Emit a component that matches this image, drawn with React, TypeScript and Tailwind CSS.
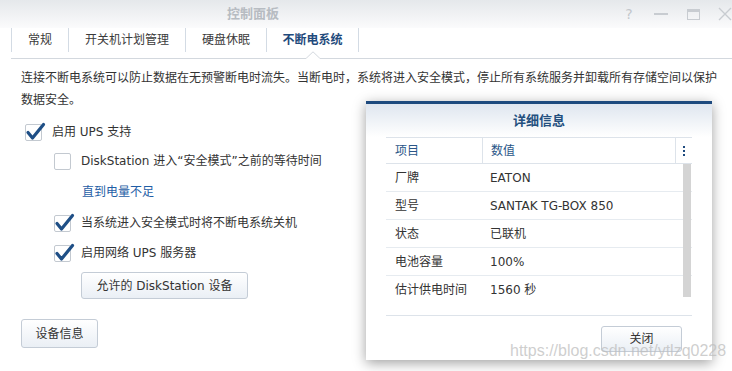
import React from "react";

const font = "font-['DejaVu_Sans','Noto_Sans_CJK_SC',sans-serif]";

const CheckBox = ({ checked }: { checked?: boolean }) => (
  <div className="relative w-[17px] h-[17px] shrink-0 rounded-[2px] border border-[#c3c9d0] bg-white">
    {checked && (
      <svg
        className="absolute -left-[1px] -top-[3px] overflow-visible"
        width="22"
        height="20"
        viewBox="0 0 22 20"
      >
        <path
          d="M3 10.5 L7.5 16 L18.5 2.5"
          fill="none"
          stroke="#1f4f86"
          strokeWidth="3.2"
          strokeLinecap="round"
          strokeLinejoin="round"
        />
      </svg>
    )}
  </div>
);

const Button = ({ label, className }: { label: string; className: string }) => (
  <button
    className={`${className} flex items-center justify-center rounded-[3px] border border-[#c4ccd6] bg-gradient-to-b from-white to-[#eaeff5] text-[12px] text-[#333]`}
  >
    {label}
  </button>
);

const tabs = [
  { label: "常规", w: "w-[57px]" },
  { label: "开关机计划管理", w: "w-[117px]" },
  { label: "硬盘休眠", w: "w-[81px]" },
  { label: "不断电系统", w: "w-[93px]", active: true },
];

const rows = [
  ["厂牌", "EATON"],
  ["型号", "SANTAK TG-BOX 850"],
  ["状态", "已联机"],
  ["电池容量", "100%"],
  ["估计供电时间", "1560 秒"],
];

export default function App() {
  return (
    <div className={`relative w-[732px] h-[371px] overflow-hidden bg-white ${font} text-[12px] text-[#333]`}>
      {/* title bar */}
      <div className="h-[28px] flex items-center bg-gradient-to-b from-[#e5e8eb] to-[#fbfbfc]">
        <div className="pl-[227px] text-[13px] font-bold text-[#b7bcc2]">控制面板</div>
        <div className="ml-auto flex items-center gap-[18px] text-[#c3c7cc]">
          <span className="w-[14px] text-center text-[14px] leading-none">?</span>
          <span className="w-[14px] h-[2px] bg-[#c8ccd1]" />
          <span className="mx-[0.5px] w-[13px] h-[11px] border border-[#c8ccd1] border-t-[3px]" />
          <svg width="14" height="14" viewBox="0 0 14 14">
            <path d="M1 1 L13 13 M13 1 L1 13" stroke="#c8ccd1" strokeWidth="1.4" />
          </svg>
        </div>
      </div>

      {/* tabs */}
      <div className="ml-[11px] h-[31px] border-b border-[#d3d8de] relative">
        <div className="flex h-[24px] items-center">
          {tabs.map((t, i) => (
            <div
              key={t.label}
              className={`${t.w} h-full flex items-center justify-center border-l border-[#d3dbe4] ${
                i === tabs.length - 1 ? "border-r" : ""
              } ${t.active ? "font-bold text-[#1f4a7c]" : "text-[#3a3a3a]"}`}
            >
              {t.label}
            </div>
          ))}
        </div>
        <svg className="absolute left-[295px] -bottom-[1px]" width="14" height="8" viewBox="0 0 14 8">
          <path d="M0 7.5 L7 0.8 L14 7.5" fill="white" stroke="#d3d8de" strokeWidth="1" />
          <rect x="0.5" y="7" width="13" height="1" fill="white" />
        </svg>
      </div>

      {/* content */}
      <div className="pl-[21px] pr-[11px] pt-[8px]">
        <p className="leading-[22px] text-[#333]">
          连接不断电系统可以防止数据在无预警断电时流失。当断电时，系统将进入安全模式，停止所有系统服务并卸载所有存储空间以保护数据安全。
        </p>

        <div className="mt-[11px] ml-[4px] flex items-center h-[20px] gap-[10px]">
          <CheckBox checked />
          <span>启用 UPS 支持</span>
        </div>

        <div className="mt-[9px] ml-[33px] flex items-center h-[20px] gap-[10px]">
          <CheckBox />
          <span>DiskStation 进入“安全模式”之前的等待时间</span>
        </div>

        <div className="mt-[11px] ml-[61px] h-[20px] flex items-center text-[#1f5ea6]">直到电量不足</div>

        <div className="mt-[11px] ml-[33px] flex items-center h-[20px] gap-[10px]">
          <CheckBox checked />
          <span>当系统进入安全模式时将不断电系统关机</span>
        </div>

        <div className="mt-[10px] ml-[33px] flex items-center h-[20px] gap-[10px]">
          <CheckBox checked />
          <span>启用网络 UPS 服务器</span>
        </div>

        <Button label="允许的 DiskStation 设备" className="mt-[9px] ml-[60px] w-[167px] h-[27px]" />

        <Button label="设备信息" className="mt-[20px] w-[77px] h-[29px]" />
      </div>

      {/* dialog */}
      <div className="absolute left-[366px] top-[101px] w-[346px] h-[259px] bg-white border-t-[3px] border-[#1d4a7e] shadow-[0_3px_12px_rgba(0,0,0,0.38)]">
        <div className="h-[33px] flex items-center justify-center bg-gradient-to-b from-[#dfe6ef] to-white text-[13px] font-bold text-[#24507f]">
          详细信息
        </div>
        <div className="mx-[20px]">
          <div className="flex h-[27px] border-t border-b border-[#dde3ea] text-[#2a5688]">
            <div className="w-[96px] pl-[9px] flex items-center">项目</div>
            <div className="w-[193px] pl-[8px] flex items-center border-l border-[#dde3ea]">数值</div>
            <div className="flex-1 flex flex-col items-center justify-center gap-[2px] border-l border-[#dde3ea]">
              <span className="w-[2px] h-[2px] bg-[#1d4a7e]" />
              <span className="w-[2px] h-[2px] bg-[#1d4a7e]" />
              <span className="w-[2px] h-[2px] bg-[#1d4a7e]" />
            </div>
          </div>
          <div className="relative h-[152px] border-b border-[#dde3ea]">
            {rows.map(([k, v], i) => (
              <div
                key={k}
                className={`flex h-[28px] ${i < rows.length - 1 ? "border-b border-[#e6ebf0]" : ""}`}
              >
                <div className="w-[96px] pl-[9px] flex items-center">{k}</div>
                <div className="pl-[8px] flex items-center">{v}</div>
              </div>
            ))}
            <div className="absolute right-[1px] top-0 w-[8px] h-[133px] bg-[#d4d4d4]" />
          </div>
          <div className="flex justify-end pt-[10px] pr-[10px]">
            <Button label="关闭" className="w-[81px] h-[26px]" />
          </div>
        </div>
      </div>

      {/* watermark */}
      <div className="absolute left-[510px] top-[343px] font-['Liberation_Sans',sans-serif] text-[16px] leading-none text-[rgba(190,190,190,0.75)]">
        https://blog.csdn.net/ytlzq0228
      </div>
    </div>
  );
}
